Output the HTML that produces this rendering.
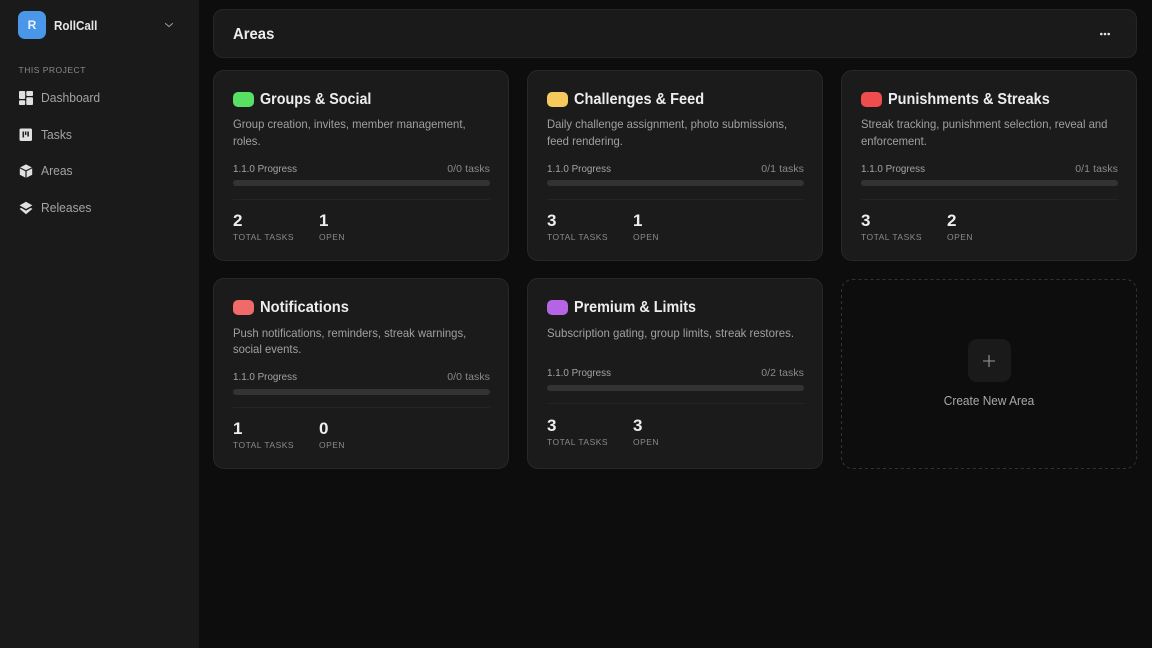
<!DOCTYPE html>
<html><head><meta charset="utf-8"><style>
*{box-sizing:border-box;margin:0;padding:0}
html,body{width:1152px;height:648px;overflow:hidden;background:#0d0d0d;font-family:"Liberation Sans",sans-serif;position:relative}
.t{position:absolute;white-space:nowrap;line-height:16px}
.side{position:absolute;left:0;top:0;width:198.5px;height:648px;background:#1a1a1a}
.logo{position:absolute;left:18px;top:11px;width:28px;height:28px;border-radius:7px;background:#4a97ea;color:#e8f2fd;font-weight:700;font-size:12px;line-height:28px;text-align:center}
.nav{color:#a3a3a3;font-size:13px;left:41px;transform:scaleX(.93);transform-origin:0 50%}
.ic{position:absolute;left:19px;width:14px;height:14px}
.head{position:absolute;left:213px;top:9px;width:924px;height:49px;background:#1a1a1a;border:1px solid #262626;border-radius:10px}
.card{position:absolute;width:296px;height:190.5px;background:#1b1b1b;border:1px solid #282828;border-radius:11px}
.sw{position:absolute;left:19px;top:21px;width:21px;height:15px;border-radius:5px}
.card .t{position:absolute}
.title{left:46px;top:20px;font-size:16px;font-weight:700;color:#ededed;line-height:18px;transform-origin:0 50%}
.d{left:19px;font-size:12px;color:#a0a0a0;transform:scaleX(.94);transform-origin:0 50%}
.pl{left:19px;font-size:10.5px;color:#a3a3a3;transform:scaleX(.937);transform-origin:0 50%}
.pr{right:18px;font-size:10.5px;color:#8a8a8a;letter-spacing:.08px}
.bar{position:absolute;left:19px;width:257px;height:6px;border-radius:3px;background:#333}
.hr{position:absolute;left:19px;width:257px;height:1px;background:#242424}
.n{font-size:17px;font-weight:700;color:#ededed}
.l{font-size:8.5px;color:#8a8a8a;letter-spacing:.48px}
.new{position:absolute;left:841px;top:279px;width:296px;height:190px}
.plus{position:absolute;left:968px;top:339px;width:43px;height:43px;border-radius:9px;background:#1a1a1a}
</style></head><body>
<div class="side"></div>
<div class="logo">R</div>
<div class="t" style="left:54px;top:18px;font-size:13px;font-weight:700;color:#e6e6e6;transform:scaleX(.895);transform-origin:0 50%">RollCall</div>
<svg style="position:absolute;left:164px;top:21px" width="10" height="8" viewBox="0 0 10 8"><path d="M1.2 2.2 5 5.6 8.8 2.2" fill="none" stroke="#a0a0a0" stroke-width="1"/></svg>
<div class="t" style="left:18.5px;top:62px;font-size:8.5px;color:#8a8a8a;letter-spacing:.5px">THIS PROJECT</div>

<svg class="ic" style="top:91px" viewBox="0 0 14 14" fill="#e0e0e0"><rect x="0" y="0" width="6.2" height="8" rx="1"/><rect x="7.3" y="0" width="6.7" height="5" rx="1"/><rect x="0" y="9.2" width="6.2" height="4.8" rx="1"/><rect x="7.3" y="6.2" width="6.7" height="7.8" rx="1"/></svg>
<div class="t nav" style="top:90px">Dashboard</div>
<svg class="ic" style="top:128px" viewBox="0 0 14 14"><rect x="0.5" y="0.5" width="12.5" height="12.5" rx="1.5" fill="#e0e0e0"/><path d="M3.5 3.5h1.6v6H3.5zM6 3.5h1.4v3.5H6zM8.3 3.5h1.6v5H8.3z" fill="#222"/></svg>
<div class="t nav" style="top:127px">Tasks</div>
<svg class="ic" style="top:164px" viewBox="0 0 14 14" fill="#e0e0e0"><path d="M7 .4 12.8 3.4 7 6.3 1.2 3.4z"/><path d="M.8 4.4 6.4 7.2V13.6L.8 10.7z"/><path d="M13.2 4.4 7.6 7.2V13.6L13.2 10.7z"/></svg>
<div class="t nav" style="top:163px">Areas</div>
<svg class="ic" style="top:201px" viewBox="0 0 14 14" fill="#e0e0e0"><path d="M7 .8 13.4 4.4 7 8 .6 4.4z"/><path d="M2.2 6.9 7 9.6 11.8 6.9 13.4 7.9 7 13.2.6 7.9z"/></svg>
<div class="t nav" style="top:200px">Releases</div>

<div class="head"></div>
<div class="t" style="left:233px;top:27px;font-size:16px;font-weight:700;color:#ececec;transform:scaleX(.93);transform-origin:0 50%">Areas</div>
<svg style="position:absolute;left:1100px;top:31.5px" width="10" height="4" viewBox="0 0 10 4" fill="#e5e5e5"><circle cx="1.3" cy="2" r="1.3"/><circle cx="5" cy="2" r="1.3"/><circle cx="8.7" cy="2" r="1.3"/></svg>

<div class="card" style="left:213px;top:70px">
<div class="sw" style="background:#58e065"></div><div class="t title" style="transform:scaleX(.895)">Groups &amp; Social</div>
<div class="t d" style="top:45px">Group creation, invites, member management,</div><div class="t d" style="top:62px">roles.</div>
<div class="t pl" style="top:90px">1.1.0 Progress</div><div class="t pr" style="top:90px">0/0 tasks</div>
<div class="bar" style="top:109px"></div><div class="hr" style="top:128px"></div>
<div class="t n" style="left:19px;top:142px">2</div><div class="t l" style="left:19px;top:158px">TOTAL TASKS</div>
<div class="t n" style="left:105px;top:142px">1</div><div class="t l" style="left:105px;top:158px">OPEN</div>
</div>

<div class="card" style="left:527px;top:70px">
<div class="sw" style="background:#f5c95c"></div><div class="t title" style="transform:scaleX(.909)">Challenges &amp; Feed</div>
<div class="t d" style="top:45px">Daily challenge assignment, photo submissions,</div><div class="t d" style="top:62px">feed rendering.</div>
<div class="t pl" style="top:90px">1.1.0 Progress</div><div class="t pr" style="top:90px">0/1 tasks</div>
<div class="bar" style="top:109px"></div><div class="hr" style="top:128px"></div>
<div class="t n" style="left:19px;top:142px">3</div><div class="t l" style="left:19px;top:158px">TOTAL TASKS</div>
<div class="t n" style="left:105px;top:142px">1</div><div class="t l" style="left:105px;top:158px">OPEN</div>
</div>

<div class="card" style="left:841px;top:70px">
<div class="sw" style="background:#ef4d4d"></div><div class="t title" style="transform:scaleX(.905)">Punishments &amp; Streaks</div>
<div class="t d" style="top:45px">Streak tracking, punishment selection, reveal and</div><div class="t d" style="top:62px">enforcement.</div>
<div class="t pl" style="top:90px">1.1.0 Progress</div><div class="t pr" style="top:90px">0/1 tasks</div>
<div class="bar" style="top:109px"></div><div class="hr" style="top:128px"></div>
<div class="t n" style="left:19px;top:142px">3</div><div class="t l" style="left:19px;top:158px">TOTAL TASKS</div>
<div class="t n" style="left:105px;top:142px">2</div><div class="t l" style="left:105px;top:158px">OPEN</div>
</div>

<div class="card" style="left:213px;top:278px">
<div class="sw" style="background:#f06a6a"></div><div class="t title" style="transform:scaleX(.918)">Notifications</div>
<div class="t d" style="top:46px">Push notifications, reminders, streak warnings,</div><div class="t d" style="top:62px">social events.</div>
<div class="t pl" style="top:90px">1.1.0 Progress</div><div class="t pr" style="top:90px">0/0 tasks</div>
<div class="bar" style="top:110px"></div><div class="hr" style="top:128px"></div>
<div class="t n" style="left:19px;top:142px">1</div><div class="t l" style="left:19px;top:158px">TOTAL TASKS</div>
<div class="t n" style="left:105px;top:142px">0</div><div class="t l" style="left:105px;top:158px">OPEN</div>
</div>

<div class="card" style="left:527px;top:278px">
<div class="sw" style="background:#b565e3"></div><div class="t title" style="transform:scaleX(.897)">Premium &amp; Limits</div>
<div class="t d" style="top:46px;transform:scaleX(.952)">Subscription gating, group limits, streak restores.</div>
<div class="t pl" style="top:86px">1.1.0 Progress</div><div class="t pr" style="top:86px">0/2 tasks</div>
<div class="bar" style="top:106px"></div><div class="hr" style="top:124px"></div>
<div class="t n" style="left:19px;top:139px">3</div><div class="t l" style="left:19px;top:155px">TOTAL TASKS</div>
<div class="t n" style="left:105px;top:139px">3</div><div class="t l" style="left:105px;top:155px">OPEN</div>
</div>

<svg class="new" viewBox="0 0 296 190"><rect x=".5" y=".5" width="295" height="189" rx="11" fill="none" stroke="#333" stroke-dasharray="3 3"/></svg>
<div class="plus"></div>
<svg style="position:absolute;left:982px;top:354px" width="14" height="14" viewBox="0 0 14 14"><path d="M7 1v12M1 7h12" stroke="#9a9a9a" stroke-width="1.1"/></svg>
<div class="t" style="left:841px;width:296px;text-align:center;top:393px;font-size:12.5px;color:#a8a8a8;transform:scaleX(.95)">Create New Area</div>
</body></html>
